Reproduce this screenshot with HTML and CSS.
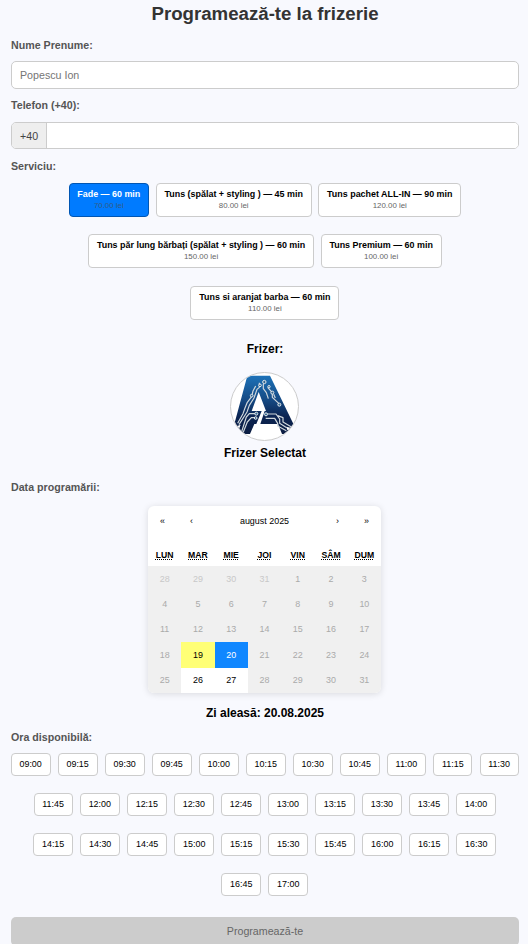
FILE: index.html
```html
<!DOCTYPE html>
<html lang="ro">
<head>
<meta charset="utf-8">
<title>Programează-te la frizerie</title>
<link rel="stylesheet" href="styles.css">
</head>
<body>
<form class="booking">
  <h1 class="title">Programează-te la frizerie</h1>
  <label class="label" for="name">Nume Prenume:</label>
  <input class="input" id="name" type="text" placeholder="Popescu Ion">
  <label class="label label-phone" for="phone">Telefon (+40):</label>
  <div class="phone"><span class="prefix">+40</span><input class="phone-input" id="phone" type="tel"></div>
  <div class="label label-service">Serviciu:</div>
  <div class="services">
    <button type="button" class="service selected"><b>Fade — 60 min</b><small>70.00 lei</small></button>
    <button type="button" class="service"><b>Tuns (spălat + styling ) — 45 min</b><small>80.00 lei</small></button>
    <button type="button" class="service"><b>Tuns pachet ALL-IN — 90 min</b><small>120.00 lei</small></button>
    <button type="button" class="service"><b>Tuns păr lung bărbați (spălat + styling ) — 60 min</b><small>150.00 lei</small></button>
    <button type="button" class="service"><b>Tuns Premium — 60 min</b><small>100.00 lei</small></button>
    <button type="button" class="service"><b>Tuns si aranjat barba — 60 min</b><small>110.00 lei</small></button>
  </div>
  <div class="barber">
    <h2 class="heading">Frizer:</h2>
    <div class="avatar">
      <svg viewBox="18 15 201 201" width="67" height="67">
        <defs>
          <linearGradient id="navy" x1="0" y1="0" x2="0" y2="1">
            <stop offset="0" stop-color="#1d72b8"/><stop offset=".4" stop-color="#164c86"/><stop offset=".7" stop-color="#0b2452"/><stop offset="1" stop-color="#0c1d42"/>
          </linearGradient>
        </defs>
        <path fill="url(#navy)" d="M67 23H135L214 186L206 198H171L159 168H106L119 129H123L101 72L80 129H110L94 168H88L75 198H32L24 183Z"/>
        <g fill="none" stroke="#cfd7dc" stroke-width="3.6" stroke-linejoin="round">
          <path d="M103 44V58L96 64L87 90L73 112L66 132L42 170"/>
          <path d="M92 54L84 69L80 86L67 103L60 120L54 137L38 166"/>
          <path d="M115 48V62L124 74L130 92"/>
          <path d="M128 58L142 74V88L162 107M146 79L151 90"/>
          <path d="M92 137H73L64 147L49 194M92 149H79L67 162L55 192"/>
          <path d="M125 138H153L164 153V166L185 179M122 151H149L158 166V174L184 188M158 143L174 149V162L198 176"/>
        </g>
        <g fill="#31658f" stroke="#e3e8eb" stroke-width="3">
          <circle cx="118" cy="42" r="5"/><circle cx="105" cy="52" r="4"/><circle cx="132" cy="56" r="3.5"/><circle cx="142" cy="74" r="4.5"/><circle cx="80" cy="83" r="4"/><circle cx="163" cy="110" r="4.5"/><circle cx="94" cy="137" r="4.5"/><circle cx="123" cy="139" r="4.5"/><circle cx="92" cy="150" r="4"/>
        </g>
        <path d="M27 178L47 170L42 183L24 185ZM184 176L210 183L205 193L187 186Z" fill="#fff"/>
      </svg>
    </div>
    <h2 class="heading">Frizer Selectat</h2>
  </div>
  <div class="label label-date">Data programării:</div>
  <div class="calendar">
    <div class="nav"><span>«</span><span>‹</span><span class="month">august 2025</span><span>›</span><span>»</span></div>
    <div class="weekdays"><abbr>LUN</abbr><abbr>MAR</abbr><abbr>MIE</abbr><abbr>JOI</abbr><abbr>VIN</abbr><abbr>SÂM</abbr><abbr>DUM</abbr></div>
    <div class="days">
      <span class="other">28</span><span class="other">29</span><span class="other">30</span><span class="other">31</span><span>1</span><span>2</span><span>3</span>
      <span>4</span><span>5</span><span>6</span><span>7</span><span>8</span><span>9</span><span>10</span>
      <span>11</span><span>12</span><span>13</span><span>14</span><span>15</span><span>16</span><span>17</span>
      <span>18</span><span class="today">19</span><span class="chosen">20</span><span>21</span><span>22</span><span>23</span><span>24</span>
      <span>25</span><span class="open">26</span><span class="open">27</span><span>28</span><span>29</span><span>30</span><span>31</span>
    </div>
  </div>
  <h2 class="heading chosen-date">Zi aleasă: 20.08.2025</h2>
  <div class="label label-hours">Ora disponibilă:</div>
  <div class="slots">
    <div class="slot-row"><button type="button">09:00</button><button type="button">09:15</button><button type="button">09:30</button><button type="button">09:45</button><button type="button">10:00</button><button type="button">10:15</button><button type="button">10:30</button><button type="button">10:45</button><button type="button">11:00</button><button type="button">11:15</button><button type="button">11:30</button></div>
    <div class="slot-row"><button type="button">11:45</button><button type="button">12:00</button><button type="button">12:15</button><button type="button">12:30</button><button type="button">12:45</button><button type="button">13:00</button><button type="button">13:15</button><button type="button">13:30</button><button type="button">13:45</button><button type="button">14:00</button></div>
    <div class="slot-row"><button type="button">14:15</button><button type="button">14:30</button><button type="button">14:45</button><button type="button">15:00</button><button type="button">15:15</button><button type="button">15:30</button><button type="button">15:45</button><button type="button">16:00</button><button type="button">16:15</button><button type="button">16:30</button></div>
    <div class="slot-row"><button type="button">16:45</button><button type="button">17:00</button></div>
  </div>
  <button type="button" class="submit" disabled>Programează-te</button>
</form>
</body>
</html>
```

FILE: styles.css
```css
* { box-sizing: border-box; }
html { height: 944px; overflow: hidden; background: #f8f9fe; }
body { margin: 0; height: 944px; overflow: hidden; font-family: "Liberation Sans", Arial, sans-serif; color: #000; }
button, input { font-family: inherit; margin: 0; }
.booking { display: flex; flex-direction: column; padding: 0 9px 0 11px; }
.title { margin: 2px 0 0; height: 23px; line-height: 23px; font-size: 18.67px; text-align: center; color: #333; }
.label { display: block; height: 14px; line-height: 14px; margin-top: 13px; font-size: 10.67px; font-weight: bold; color: #555; }
.input { height: 28px; margin-top: 9px; padding: 0 8px; border: 1px solid #ccc; border-radius: 5px; background: #fff; font-size: 10.67px; }
.input::placeholder { color: #757575; }
.label-phone { margin-top: 9px; }
.phone { display: flex; height: 27px; margin-top: 10px; border: 1px solid #ccc; border-radius: 5px; background: #fff; overflow: hidden; }
.prefix { width: 35px; line-height: 26px; padding-left: 8px; background: #eee; border-right: 1px solid #ccc; font-size: 10.67px; color: #444; }
.phone-input { flex: 1; min-width: 0; border: 0; outline: 0; font-size: 10.67px; }
.label-service { margin-top: 10px; }
.services { display: flex; flex-wrap: wrap; justify-content: center; gap: 17.4px 6.6px; margin: 10px 0.2px 0 0; }
.service { display: flex; flex-direction: column; align-items: center; height: 34px; padding: 4px 7.8px 0; border: 1px solid #ccc; border-radius: 4px; background: #fff; color: #000; white-space: nowrap; }
.service b { font-size: 8.93px; line-height: 12px; }
.service small { font-size: 7.9px; line-height: 12px; color: #666; }
.service.selected { background: #007bff; border-color: #0056b3; color: #fff; }
.service.selected small { color: #345b85; }
.barber { display: flex; flex-direction: column; align-items: center; margin-top: 21.2px; }
.heading { margin: 0; height: 16px; line-height: 16px; font-size: 12px; text-align: center; }
.avatar { width: 69px; height: 69px; margin: 15px 1px 4px 0; border: 1px solid #ccc; border-radius: 50%; background: #fff; overflow: hidden; }
.avatar svg { display: block; }
.label-date { margin-top: 19px; }
.calendar { width: 233px; height: 187px; margin: 12px 0 0 137px; border-radius: 6px; background: #fff; overflow: hidden; box-shadow: 0 1px 7px rgba(0, 0, 0, .13); }
.nav { display: grid; grid-template-columns: 29px 29px 1fr 29px 29px; height: 30px; line-height: 30px; text-align: center; font-size: 8.93px; }
.weekdays { display: grid; grid-template-columns: repeat(7, 1fr); justify-items: center; height: 30px; padding-top: 13px; font-size: 8.67px; line-height: 12px; font-weight: bold; }
.weekdays abbr { text-decoration: underline dotted; }
.days { display: grid; grid-template-columns: repeat(7, 1fr); grid-template-rows: repeat(5, 1fr); height: 127px; font-size: 8.93px; }
.days span { display: grid; place-items: center; background: #f0f0f0; color: #aaa; }
.days .other { color: #c8c8c8; }
.days .today { background: #ffff76; color: #000; }
.days .chosen { background: #1087ff; color: #fff; }
.days .open { background: #fff; color: #000; }
.chosen-date { margin-top: 12px; }
.label-hours { margin-top: 9px; }
.slots { display: flex; flex-direction: column; gap: 17px; margin: 9px 0.6px 0 0; }
.slot-row { display: flex; justify-content: center; gap: 7.1px; }
.slots button { height: 23px; padding: 0 7.8px; border: 1px solid #ccc; border-radius: 4px; background: #fff; color: #000; font-size: 8.93px; }
.submit { height: 29px; margin-top: 21px; border: 0; border-radius: 5px; background: #ccc; color: #666; font-size: 10.67px; }
```
